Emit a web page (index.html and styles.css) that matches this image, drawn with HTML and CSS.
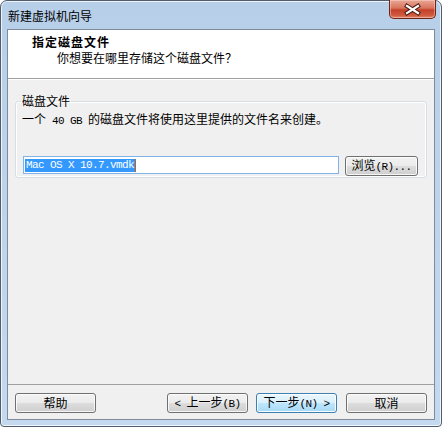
FILE: index.html
```html
<!doctype html>
<html lang="zh-CN">
<head>
  <meta charset="UTF-8" />
  <meta name="viewport" content="width=device-width, initial-scale=1" />
  <title>新建虚拟机向导</title>
  <link rel="stylesheet" href="styles.css">
</head>
<body>
  <div class="window">
    <div class="titlebar">
      <span class="title">新建虚拟机向导</span>
      <div class="close">
        <svg width="47" height="19" viewBox="0 0 47 19">
          <path d="M18 6 L29 13 M29 6 L18 13" stroke="#4a1a12" stroke-width="4.2" stroke-linecap="square" fill="none" />
          <path d="M18 6 L29 13 M29 6 L18 13" stroke="#ffffff" stroke-width="2.2" stroke-linecap="square" fill="none" />
        </svg>
      </div>
    </div>

    <div class="client">
      <div class="header">
        <div class="h-title">指定磁盘文件</div>
        <div class="h-sub">你想要在哪里存储这个磁盘文件？</div>
      </div>

      <div class="content">
        <fieldset class="group">
          <legend>磁盘文件</legend>
          <p class="desc">一个<span class="en"> 40 GB </span>的磁盘文件将使用这里提供的文件名来创建。</p>
          <div class="row">
            <div class="field"><span class="sel en">Mac OS X 10.7.vmdk</span><span class="caret"></span></div>
            <button class="btn browse">浏览<span class="en">(R)...</span></button>
          </div>
        </fieldset>
      </div>

      <div class="footer">
        <button class="btn">帮助</button>
        <div class="spacer"></div>
        <button class="btn"><span class="en">&lt; </span>上一步<span class="en">(B)</span></button>
        <button class="btn default">下一步<span class="en">(N) &gt;</span></button>
        <button class="btn cancel">取消</button>
      </div>
    </div>
  </div>
</body>
</html>
```

FILE: styles.css
```css
html, body {
  margin: 0;
  padding: 0;
}
body {
  width: 442px;
  height: 427px;
  background: #ffffff;
  font-family: "Noto Sans CJK SC", "DejaVu Sans", sans-serif;
  font-size: 12px;
  line-height: 14px;
  color: #000;
}
.en {
  font-family: "Liberation Mono", monospace;
  font-size: 11px;
  letter-spacing: -0.6px;
}

/* window frame */
.window {
  box-sizing: border-box;
  width: 442px;
  height: 427px;
  display: flex;
  flex-direction: column;
  padding: 0 6px 6px 6px;
  border: 1px solid #4f5d6e;
  border-radius: 7px 7px 4px 4px;
  background: linear-gradient(to bottom, #b7cfe8 0%, #bcd3eb 40%, #c4d9ef 100%);
  box-shadow: inset 0 0 0 1px rgba(255, 255, 255, 0.75);
}
.titlebar {
  height: 28px;
  display: flex;
  align-items: center;
}
.title {
  padding-left: 1px;
  padding-top: 1px;
}
.close {
  margin-left: auto;
  align-self: flex-start;
  width: 47px;
  height: 19px;
  margin-top: -1px;
  margin-right: -1px;
  box-sizing: border-box;
  border: 1px solid #6e2418;
  border-top: 0;
  border-radius: 0 0 5px 5px;
  background: linear-gradient(to bottom, #e9a897 0%, #d9735c 45%, #c4412a 55%, #cf5a3f 85%, #e08a6e 100%);
  box-shadow: inset 0 0 0 1px rgba(255, 220, 210, 0.45);
  overflow: hidden;
}
.close svg {
  display: block;
  margin-left: -1px;
}

/* client area */
.client {
  flex: 1;
  display: flex;
  flex-direction: column;
  background: #f0f0f0;
  border: 1px solid #7d8b9a;
}
.header {
  box-sizing: border-box;
  height: 49px;
  background: #ffffff;
  border-bottom: 1px solid #a0a0a0;
  padding: 5px 0 0 24px;
}
.h-title {
  font-weight: bold;
  letter-spacing: 1px;
  margin-bottom: 2px;
}
.h-sub {
  padding-left: 25px;
}
.content {
  flex: 1;
  border-top: 1px solid #ffffff;
  padding-top: 14px;
}
.group {
  margin: 0 7px;
  padding: 0 8px 1px 7px;
  border: 1px solid #d5dfe5;
  border-radius: 3px;
  box-shadow: inset 0 0 0 1px #ffffff;
}
.group legend {
  padding: 0 1px;
  margin-left: -2px;
}
.desc {
  margin: 4px 0 0 -1px;
}
.row {
  display: flex;
  align-items: flex-start;
  gap: 6px;
  margin-top: 28px;
}
.field {
  flex: 1;
  height: 18px;
  box-sizing: border-box;
  border: 1px solid #7eb4ea;
  background: #ffffff;
  display: flex;
  align-items: center;
  padding-left: 1px;
}
.sel {
  background: #3399ff;
  color: #ffffff;
  line-height: 13px;
  padding: 0 1px;
}
.caret {
  width: 1px;
  height: 13px;
  background: #c86400;
}

/* buttons */
.btn {
  width: 81px;
  height: 20px;
  box-sizing: border-box;
  padding: 0;
  font-family: inherit;
  font-size: 12px;
  line-height: 16px;
  color: #000;
  border: 1px solid #707070;
  border-radius: 3px;
  background: linear-gradient(to bottom, #f2f2f2 0%, #ebebeb 50%, #dddddd 51%, #cfcfcf 100%);
  box-shadow: inset 0 0 0 1px rgba(255, 255, 255, 0.8);
}
.btn.default {
  border-color: #3c7fb1;
  background: linear-gradient(to bottom, #eaf6fd 0%, #d9f0fc 50%, #bee6fd 51%, #a7d9f5 100%);
  box-shadow: inset 0 0 0 1px rgba(255, 255, 255, 0.9);
}
.browse {
  width: 73px;
}
.footer {
  border-top: 1px solid #a0a0a0;
  padding: 8px 7px 6px 7px;
  display: flex;
  gap: 8px;
}
.spacer {
  flex: 1;
}
.cancel {
  margin-left: 1px;
}
```
